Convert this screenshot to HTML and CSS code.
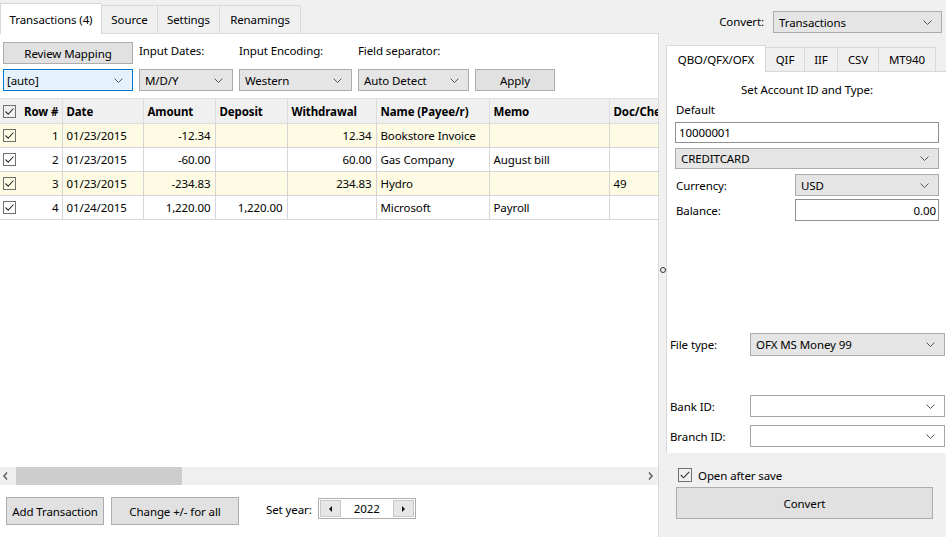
FILE: index.html
```html
<!DOCTYPE html>
<html lang="en">
<head>
    <meta charset="UTF-8">
    <title>Transactions</title>
    <link rel="stylesheet" href="styles.css">
</head>
<body>
<div class="app">
    <div class="left">
        <div class="tabs">
            <div class="tab active" style="width:102px">Transactions (4)</div>
            <div class="tab" style="width:57px">Source</div>
            <div class="tab" style="width:63px">Settings</div>
            <div class="tab" style="width:82px">Renamings</div>
        </div>
        <div class="panel">
            <div class="options">
                <div class="btn">Review Mapping</div>
                <div class="lbl">Input Dates:</div>
                <div class="lbl">Input Encoding:</div>
                <div class="lbl">Field separator:</div>
                <div></div>
                <div class="combo focus"><span>[auto]</span><svg class="chev" viewBox="0 0 9 5"><path d="M0.5 0.5 L4.5 4.5 L8.5 0.5"/></svg></div>
                <div class="combo"><span>M/D/Y</span><svg class="chev" viewBox="0 0 9 5"><path d="M0.5 0.5 L4.5 4.5 L8.5 0.5"/></svg></div>
                <div class="combo"><span>Western</span><svg class="chev" viewBox="0 0 9 5"><path d="M0.5 0.5 L4.5 4.5 L8.5 0.5"/></svg></div>
                <div class="combo"><span>Auto Detect</span><svg class="chev" viewBox="0 0 9 5"><path d="M0.5 0.5 L4.5 4.5 L8.5 0.5"/></svg></div>
                <div class="btn">Apply</div>
            </div>

            <div class="grid">
                <table>
                    <colgroup>
                        <col style="width:62px"><col style="width:81px"><col style="width:72px"><col style="width:72px">
                        <col style="width:89px"><col style="width:113px"><col style="width:120px"><col style="width:70px">
                    </colgroup>
                    <tr>
                        <th><div class="rowcell"><svg class="cb" viewBox="0 0 13 13"><rect x="0.5" y="0.5" width="12" height="12"/><path d="M2.5 6.5 L5.2 9.2 L10.5 3.5"/></svg><span class="rownum">Row #</span></div></th>
                        <th>Date</th><th>Amount</th><th>Deposit</th><th>Withdrawal</th><th>Name (Payee/r)</th><th>Memo</th><th>Doc/Check</th>
                    </tr>
                    <tr class="hl">
                        <td><div class="rowcell"><svg class="cb" viewBox="0 0 13 13"><rect x="0.5" y="0.5" width="12" height="12"/><path d="M2.5 6.5 L5.2 9.2 L10.5 3.5"/></svg><span class="rownum">1</span></div></td>
                        <td>01/23/2015</td><td class="num">-12.34</td><td></td><td class="num">12.34</td><td>Bookstore Invoice</td><td></td><td></td>
                    </tr>
                    <tr>
                        <td><div class="rowcell"><svg class="cb" viewBox="0 0 13 13"><rect x="0.5" y="0.5" width="12" height="12"/><path d="M2.5 6.5 L5.2 9.2 L10.5 3.5"/></svg><span class="rownum">2</span></div></td>
                        <td>01/23/2015</td><td class="num">-60.00</td><td></td><td class="num">60.00</td><td>Gas Company</td><td>August bill</td><td></td>
                    </tr>
                    <tr class="hl">
                        <td><div class="rowcell"><svg class="cb" viewBox="0 0 13 13"><rect x="0.5" y="0.5" width="12" height="12"/><path d="M2.5 6.5 L5.2 9.2 L10.5 3.5"/></svg><span class="rownum">3</span></div></td>
                        <td>01/23/2015</td><td class="num">-234.83</td><td></td><td class="num">234.83</td><td>Hydro</td><td></td><td>49</td>
                    </tr>
                    <tr>
                        <td><div class="rowcell"><svg class="cb" viewBox="0 0 13 13"><rect x="0.5" y="0.5" width="12" height="12"/><path d="M2.5 6.5 L5.2 9.2 L10.5 3.5"/></svg><span class="rownum">4</span></div></td>
                        <td>01/24/2015</td><td class="num">1,220.00</td><td class="num">1,220.00</td><td></td><td>Microsoft</td><td>Payroll</td><td></td>
                    </tr>
                </table>
            </div>
            <div class="grid-space"></div>

            <div class="hscroll">
                <div class="arrow"><svg viewBox="0 0 5 8" width="5" height="8"><path d="M4 0.5 L1 4 L4 7.5"/></svg></div>
                <div class="thumb"></div>
                <div class="track"></div>
                <div class="arrow"><svg viewBox="0 0 5 8" width="5" height="8"><path d="M1 0.5 L4 4 L1 7.5"/></svg></div>
            </div>

            <div class="actions">
                <div class="btn add">Add Transaction</div>
                <div class="btn change">Change +/- for all</div>
                <span class="year-lbl">Set year:</span>
                <div class="spinner">
                    <div class="spin-btn"><svg viewBox="0 0 3 6" width="3" height="6"><path d="M3 0 L0 3 L3 6 Z"/></svg></div>
                    <div class="spin-val">2022</div>
                    <div class="spin-btn"><svg viewBox="0 0 3 6" width="3" height="6"><path d="M0 0 L3 3 L0 6 Z"/></svg></div>
                </div>
            </div>
        </div>
    </div>

    <div class="splitter"><div class="grip"></div></div>

    <div class="right">
        <div class="convert-row">
            <span class="lbl">Convert:</span>
            <div class="combo convert-combo"><span>Transactions</span><svg class="chev" viewBox="0 0 9 5"><path d="M0.5 0.5 L4.5 4.5 L8.5 0.5"/></svg></div>
        </div>
        <div class="tabs rtabs">
            <div class="tab active" style="width:100px">QBO/QFX/OFX</div>
            <div class="tab" style="width:40px">QIF</div>
            <div class="tab" style="width:34px">IIF</div>
            <div class="tab" style="width:42px">CSV</div>
            <div class="tab" style="width:58px">MT940</div>
        </div>
        <div class="tabpage">
            <div class="acct">
                <div class="acct-title">Set Account ID and Type:</div>
                <div class="acct-default">Default</div>
                <div class="text-input">10000001</div>
                <div class="combo acct-type"><span>CREDITCARD</span><svg class="chev" viewBox="0 0 9 5"><path d="M0.5 0.5 L4.5 4.5 L8.5 0.5"/></svg></div>
                <div class="field currency">
                    <span>Currency:</span>
                    <div class="combo"><span>USD</span><svg class="chev" viewBox="0 0 9 5"><path d="M0.5 0.5 L4.5 4.5 L8.5 0.5"/></svg></div>
                </div>
                <div class="field balance">
                    <span>Balance:</span>
                    <div class="text-input right-text">0.00</div>
                </div>
            </div>
            <div class="ofx">
                <div class="ofx-row filetype">
                    <span>File type:</span>
                    <div class="combo"><span>OFX MS Money 99</span><svg class="chev" viewBox="0 0 9 5"><path d="M0.5 0.5 L4.5 4.5 L8.5 0.5"/></svg></div>
                </div>
                <div class="ofx-row bank">
                    <span>Bank ID:</span>
                    <div class="combo white"><span></span><svg class="chev" viewBox="0 0 9 5"><path d="M0.5 0.5 L4.5 4.5 L8.5 0.5"/></svg></div>
                </div>
                <div class="ofx-row branch">
                    <span>Branch ID:</span>
                    <div class="combo white"><span></span><svg class="chev" viewBox="0 0 9 5"><path d="M0.5 0.5 L4.5 4.5 L8.5 0.5"/></svg></div>
                </div>
            </div>
        </div>
        <div class="save">
            <label class="open-after">
                <svg class="cb big" viewBox="0 0 14 14"><rect x="0.5" y="0.5" width="13" height="13"/><path d="M2.8 7 L5.6 9.8 L11.2 3.8"/></svg>
                <span>Open after save</span>
            </label>
            <div class="btn convert-btn">Convert</div>
        </div>
    </div>
</div>
</body>
</html>
```

FILE: styles.css
```css
* {
    box-sizing: border-box;
}
body {
    margin: 0;
    font-family: "Noto Sans", "Open Sans", sans-serif;
    font-size: 11.5px;
    letter-spacing: -0.1px;
    color: #000;
    background: #f0f0f0;
}
.app {
    display: flex;
    width: 946px;
    height: 537px;
    overflow: hidden;
}

/* tabs */
.tabs {
    height: 33px;
    display: flex;
    align-items: flex-end;
}
.tab {
    height: 28px;
    border: 1px solid #d9d9d9;
    border-bottom: none;
    margin-left: -1px;
    display: flex;
    align-items: center;
    justify-content: center;
    white-space: nowrap;
    background: #f0f0f0;
}
.tab:first-child {
    margin-left: 0;
}
.tab.active {
    height: 31px;
    background: #fff;
    position: relative;
    z-index: 1;
    margin-bottom: -1px;
}

/* left pane */
.left {
    width: 659px;
    display: flex;
    flex-direction: column;
}
.panel {
    flex: 1;
    background: #fff;
    border-top: 1px solid #d9d9d9;
    border-right: 1px solid #d9d9d9;
    display: flex;
    flex-direction: column;
    min-height: 0;
}
.options {
    display: grid;
    grid-template-columns: 130px 94px 113px 111px 80px;
    grid-template-rows: 22px 22px;
    column-gap: 6px;
    row-gap: 5px;
    padding: 8px 0 0 3px;
}
.lbl {
    line-height: 18px;
    white-space: nowrap;
}
.btn {
    background: #e1e1e1;
    border: 1px solid #adadad;
    display: flex;
    align-items: center;
    justify-content: center;
    white-space: nowrap;
}
.combo {
    background: #e5e5e5;
    border: 1px solid #acacac;
    display: flex;
    align-items: center;
    justify-content: space-between;
    padding: 0 9px 0 5px;
    white-space: nowrap;
}
.combo.focus {
    background: #e5f1fb;
    border-color: #0078d7;
    padding-left: 3px;
}
.combo.white {
    background: #fff;
    border-color: #a6a6a6;
}
.chev {
    width: 9px;
    height: 5px;
    flex: none;
}
.chev path {
    fill: none;
    stroke: #555;
    stroke-width: 1;
}

/* data grid */
.grid {
    margin-top: 7px;
    overflow: hidden;
}
.grid table {
    border-collapse: collapse;
    table-layout: fixed;
    width: 669px;
}
.grid th,
.grid td {
    border: 1px solid #d6d6d6;
    padding: 0 4px;
    white-space: nowrap;
    overflow: hidden;
    text-align: left;
}
.grid th {
    height: 25px;
    background: #f0f0f0;
    font-weight: bold;
    border-color: #dcdcdc;
}
.grid td {
    height: 24px;
}
.grid tr.hl td {
    background: #fdfbe3;
}
.grid td.num {
    text-align: right;
}
.grid th:first-child,
.grid td:first-child {
    border-left: none;
    padding: 0 3px;
}
.rowcell {
    display: flex;
    align-items: center;
}
.rownum {
    flex: 1;
    text-align: right;
}
th .rownum {
    text-align: left;
    padding-left: 8px;
}
.cb {
    width: 13px;
    height: 13px;
    flex: none;
}
.cb rect {
    fill: none;
    stroke: #707070;
}
.cb path {
    fill: none;
    stroke: #333;
    stroke-width: 1.1;
}
.grid-space {
    flex: 1;
}

/* horizontal scrollbar */
.hscroll {
    height: 18px;
    display: flex;
    background: #f0f0f0;
}
.hscroll .arrow {
    width: 16px;
    display: flex;
    align-items: center;
    justify-content: center;
}
.hscroll .arrow:first-child {
    justify-content: flex-start;
    padding-left: 3px;
}
.hscroll .arrow path {
    fill: none;
    stroke: #606060;
    stroke-width: 1.5;
}
.hscroll .thumb {
    width: 166px;
    background: #cdcdcd;
}
.hscroll .track {
    flex: 1;
}

/* bottom actions */
.actions {
    height: 52px;
    display: flex;
    align-items: center;
    padding-left: 6px;
}
.actions .btn {
    height: 28px;
}
.btn.add {
    width: 98px;
}
.btn.change {
    width: 128px;
    margin-left: 7px;
}
.year-lbl {
    margin-left: 27px;
    margin-right: 6px;
    margin-top: -3px;
}
.spinner {
    width: 98px;
    height: 21px;
    margin-top: -5px;
    border: 1px solid #adadad;
    background: #fff;
    display: flex;
    padding: 1px;
}
.spin-btn {
    width: 21px;
    background: #e6e6e6;
    border: 1px solid #c8c8c8;
    display: flex;
    align-items: center;
    justify-content: center;
}
.spin-btn path {
    fill: #111;
}
.spin-val {
    flex: 1;
    text-align: center;
    line-height: 17px;
}

/* splitter */
.splitter {
    width: 7px;
    display: flex;
    align-items: center;
    justify-content: center;
}
.grip {
    width: 6px;
    height: 6px;
    margin-top: 3px;
    border: 1px solid #333;
    border-radius: 50%;
}

/* right pane */
.right {
    width: 280px;
    display: flex;
    flex-direction: column;
}
.convert-row {
    height: 45px;
    display: flex;
    justify-content: flex-end;
    align-items: flex-start;
    gap: 9px;
    padding: 11px 4px 0 0;
}
.convert-row .lbl {
    line-height: 22px;
}
.convert-combo {
    width: 169px;
    height: 22px;
}
.rtabs {
    height: 26px;
}
.rtabs .tab {
    height: 24px;
}
.rtabs .tab.active {
    height: 27px;
}
.tabpage {
    height: 382px;
    background: #fff;
    border-top: 1px solid #d9d9d9;
    border-left: 1px solid #d9d9d9;
    display: flex;
    flex-direction: column;
}
.acct {
    padding: 10px 7px 0 8px;
    display: flex;
    flex-direction: column;
}
.acct-title {
    text-align: center;
    line-height: 16px;
}
.acct-default {
    line-height: 16px;
    margin-top: 4px;
    padding-left: 1px;
}
.text-input {
    height: 21px;
    margin-top: 4px;
    border: 1px solid #8f8f8f;
    background: #fff;
    padding: 0 3px;
    display: flex;
    align-items: center;
}
.text-input.right-text {
    justify-content: flex-end;
    padding-right: 2px;
}
.acct-type {
    height: 21px;
    margin-top: 5px;
}
.field {
    display: flex;
    align-items: center;
    height: 22px;
    padding-left: 1px;
}
.field > span {
    flex: 1;
}
.field .combo,
.field .text-input {
    width: 144px;
    height: 22px;
    margin-top: 0;
}
.currency {
    margin-top: 5px;
}
.balance {
    margin-top: 3px;
}
.ofx {
    display: flex;
    flex-direction: column;
    padding: 0 1px 0 3px;
    margin-top: 112px;
}
.ofx-row {
    display: flex;
    align-items: center;
    height: 22px;
}
.ofx-row > span {
    width: 80px;
}
.ofx-row .combo {
    flex: 1;
    height: 100%;
}
.ofx-row.filetype {
    height: 23px;
}
.ofx-row.bank {
    margin-top: 39px;
}
.ofx-row.branch {
    margin-top: 8px;
}
.save {
    padding: 15px 13px 0 10px;
    display: flex;
    flex-direction: column;
}
.open-after {
    display: flex;
    align-items: center;
    gap: 6px;
    height: 14px;
    padding-left: 2px;
}
.cb.big {
    width: 14px;
    height: 14px;
}
.convert-btn {
    height: 32px;
    margin-top: 5px;
}
```
